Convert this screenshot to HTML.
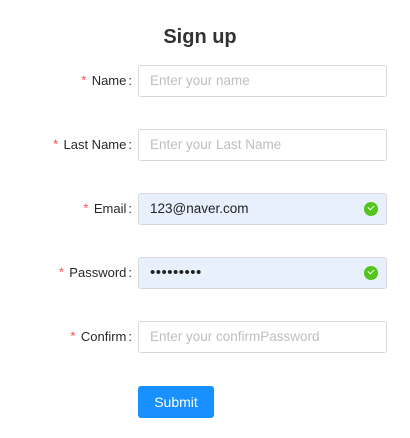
<!DOCTYPE html>
<html><head><style>
body{margin:0;width:410px;height:438px;background:#fff;font-family:"Liberation Sans",sans-serif;position:relative;overflow:hidden}
h1{position:absolute;left:0;width:400px;top:24px;margin:0;text-align:center;font-size:20px;font-weight:bold;color:#333;line-height:26px}
.lbl{position:absolute;right:278px;font-size:13px;color:rgba(0,0,0,.85);line-height:32px;white-space:nowrap}
.lbl b{color:#ff4d4f;font-weight:normal;margin-right:4px;font-family:"Liberation Mono",monospace}
.lbl i{font-style:normal;margin-left:2px}
.in{position:absolute;left:138px;height:30px;border:1px solid #d9d9d9;border-radius:3px;font-size:13.5px;line-height:30px;padding-left:11px;box-sizing:content-box;width:236px;color:#bfbfbf}
.f{background:#e8f0fe;color:#222}
.ok{position:absolute;right:8px;top:8px;width:14px;height:14px;border-radius:50%;background:#52c41a}
.ok:after{content:"";position:absolute;left:4px;top:3px;width:5px;height:3px;border-left:1.5px solid #fff;border-bottom:1.5px solid #fff;transform:rotate(-45deg)}
.btn{position:absolute;left:138px;top:386px;width:76px;height:32px;background:#1890ff;border-radius:3px;color:#fff;font-size:14px;line-height:32px;text-align:center}
</style></head><body>
<h1>Sign up</h1>
<div class="lbl" style="top:65px"><b>*</b>Name<i>:</i></div><div class="in" style="top:65px">Enter your name</div>
<div class="lbl" style="top:129px"><b>*</b>Last Name<i>:</i></div><div class="in" style="top:129px">Enter your Last Name</div>
<div class="lbl" style="top:193px"><b>*</b>Email<i>:</i></div><div class="in f" style="top:193px">123@naver.com<span class="ok"></span></div>
<div class="lbl" style="top:257px"><b>*</b>Password<i>:</i></div><div class="in f" style="top:257px;font-size:15px;letter-spacing:0.5px">•••••••••<span class="ok"></span></div>
<div class="lbl" style="top:321px"><b>*</b>Confirm<i>:</i></div><div class="in" style="top:321px">Enter your confirmPassword</div>
<div class="btn">Submit</div>
</body></html>
